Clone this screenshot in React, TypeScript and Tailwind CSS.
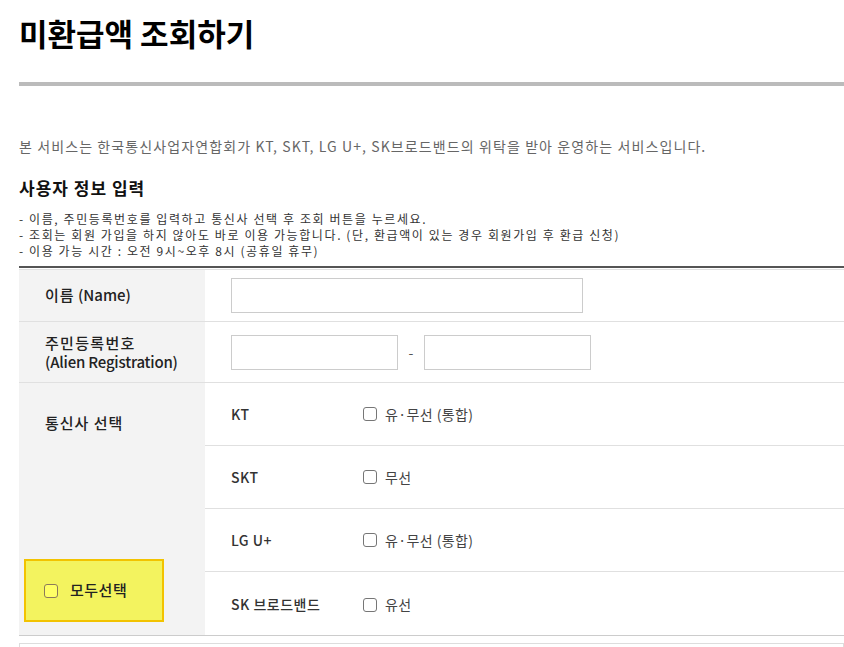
const font = { fontFamily: '"Noto Sans CJK KR", "Noto Sans", sans-serif' };

function Box({ yellow = false }: { yellow?: boolean }) {
  return (
    <span
      className={
        yellow
          ? "inline-block w-[14px] h-[14px] rounded-[3px] border border-[#8c7a5a] bg-[#ffff66] shrink-0"
          : "inline-block w-[14px] h-[14px] rounded-[3px] border border-[#767676] bg-white shrink-0"
      }
    />
  );
}

const carriers = [
  { name: "KT", option: "유·무선 (통합)" },
  { name: "SKT", option: "무선" },
  { name: "LG U+", option: "유·무선 (통합)" },
  { name: "SK 브로드밴드", option: "유선" },
];

export default function App() {
  return (
    <div className="w-[844px] h-[647px] overflow-hidden bg-white pl-[19px] text-[#222]" style={font}>
      <h1 className="mt-[15px] text-[31px] leading-[36px] font-bold text-black">미환급액 조회하기</h1>
      <div className="mt-[31px] h-[4px] bg-[#bbbbbb]" />

      <p className="mt-[50px] text-[14px] leading-[20px] text-[#666] tracking-[1.1px]">
        본 서비스는 한국통신사업자연합회가 KT, SKT, LG U+, SK브로드밴드의 위탁을 받아 운영하는 서비스입니다.
      </p>

      <h2 className="mt-[20px] text-[17px] leading-[24px] font-bold text-[#111] tracking-[1px]">사용자 정보 입력</h2>
      <ul className="mt-[11px] text-[12px] leading-[16px] text-[#333] tracking-[1.6px]">
        <li>- 이름, 주민등록번호를 입력하고 통신사 선택 후 조회 버튼을 누르세요.</li>
        <li>- 조회는 회원 가입을 하지 않아도 바로 이용 가능합니다. (단, 환급액이 있는 경우 회원가입 후 환급 신청)</li>
        <li>- 이용 가능 시간 : 오전 9시~오후 8시 (공휴일 휴무)</li>
      </ul>

      <div className="mt-[7px] border-t-2 border-[#555] pt-px">
        <div className="border-t border-[#e0e0e0]">
          {/* 이름 */}
          <div className="flex h-[52px] border-b border-[#e0e0e0]">
            <div className="w-[186px] bg-[#f3f3f3] pl-[26px] flex items-center text-[15px] font-medium">
              <span className="tracking-[1px]">이름</span>&nbsp;(Name)
            </div>
            <div className="flex-1 pl-[26px] flex items-center">
              <div className="w-[352px] h-[35px] border border-[#ccc] bg-white" />
            </div>
          </div>

          {/* 주민등록번호 */}
          <div className="flex h-[61px] border-b border-[#e0e0e0]">
            <div className="w-[186px] bg-[#f3f3f3] pl-[26px] flex flex-col justify-center text-[15px] leading-[19px] font-medium">
              <span className="tracking-[1.3px]">주민등록번호</span>
              <span className="tracking-[-0.2px]">(Alien Registration)</span>
            </div>
            <div className="flex-1 pl-[26px] flex items-center">
              <div className="w-[167px] h-[35px] border border-[#ccc] bg-white" />
              <span className="w-[26px] text-center text-[14px] text-[#555]">-</span>
              <div className="w-[167px] h-[35px] border border-[#ccc] bg-white" />
            </div>
          </div>

          {/* 통신사 선택 */}
          <div className="flex border-b border-[#ccc]">
            <div className="w-[186px] bg-[#f3f3f3] flex flex-col justify-between pb-[13px]">
              <div className="pl-[26px] pt-[30px] text-[15px] leading-[20px] font-medium tracking-[1px]">통신사 선택</div>
              <div className="ml-[5px] w-[140px] h-[63px] bg-[#f3f35f] border-2 border-[#f2c300] flex items-center pl-[18px] gap-[12px]">
                <Box yellow />
                <span className="text-[15px] font-medium text-[#222] tracking-[0.5px]">모두선택</span>
              </div>
            </div>
            <div className="flex-1">
              {carriers.map((c, i) => (
                <div
                  key={c.name}
                  className={
                    i < carriers.length - 1
                      ? "h-[63px] flex items-center pl-[26px] border-b border-[#e0e0e0]"
                      : "h-[63px] flex items-center pl-[26px] pt-[2px]"
                  }
                >
                  <span className="w-[132px] text-[14px] font-medium text-[#333] tracking-[0.5px]">{c.name}</span>
                  <span className="flex items-center gap-[8px] text-[14px] text-[#444] tracking-[0.4px]">
                    <Box />
                    {c.option}
                  </span>
                </div>
              ))}
            </div>
          </div>
        </div>
      </div>

      <div className="mt-[7px] h-[30px] border border-[#ddd]" />
    </div>
  );
}
